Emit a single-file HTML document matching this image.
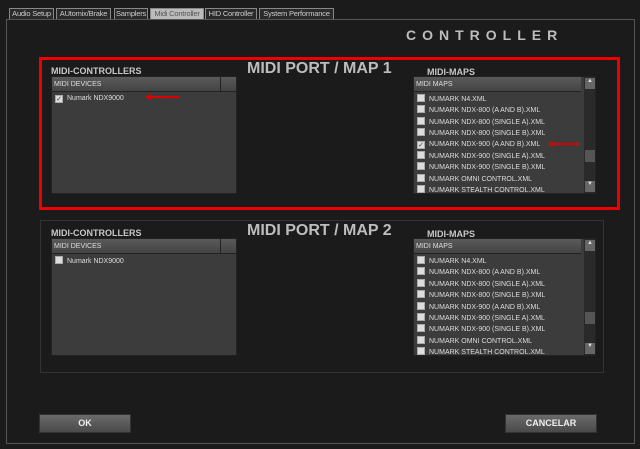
<!DOCTYPE html>
<html><head><style>
*{margin:0;padding:0;box-sizing:border-box}
body{width:640px;height:449px;background:#1b1b1b;position:relative;overflow:hidden;font-family:"Liberation Sans",sans-serif}
.a{position:absolute}
.tab{position:absolute;top:8px;height:12px;background:#2a2a2a;border:1px solid #888;color:#ccc;font-size:7.5px;letter-spacing:-0.2px;line-height:10px;padding:0 1px;white-space:nowrap;overflow:hidden;text-align:center}
.h{font-weight:bold;color:#c8c8c8;font-size:9px}
.big{font-weight:bold;color:#bdbdbd;font-size:16px}
.list{position:absolute;background:#3c3c3c;border:1px solid #222}
.hd{position:absolute;left:0;top:0;height:15px;background:linear-gradient(#5a5a5a,#444);border-bottom:1px solid #222;color:#ddd;font-size:7px;line-height:15px;padding-left:2px}
.it{position:absolute;left:3px;font-size:7px;color:#ddd;line-height:10px;white-space:nowrap}
.cb{display:inline-block;width:8px;height:8px;background:#ddd;border:1px solid #aaa;vertical-align:-1px;margin-right:4px;font-size:7px;color:#335;line-height:7px;text-align:center}
.sb{position:absolute;background:#2a2a2a}
.btn{position:absolute;height:19px;width:92px;background:linear-gradient(#6a6a6a,#4a4a4a);border:1px solid #333;color:#eee;font-weight:bold;font-size:9px;text-align:center;line-height:17px}
</style></head><body>
<div class="tab" style="left:9px;width:45px">Audio Setup</div>
<div class="tab" style="left:56px;width:55px">AUtomix/Brake</div>
<div class="tab" style="left:114px;width:34px">Samplers</div>
<div class="tab" style="left:150px;width:54px;background:#bbb;color:#555">Midi Controller</div>
<div class="tab" style="left:205px;width:52px">HID Controller</div>
<div class="tab" style="left:259px;width:75px">System Performance</div>
<div class="a" style="left:6px;top:19px;width:629px;height:425px;border:1px solid #555"></div>
<div class="a big" style="left:406px;top:27px;letter-spacing:6px;font-size:14px">CONTROLLER</div>

<div class="a" style="left:39px;top:57px;width:581px;height:153px;border:3px solid #e00"></div>
<div class="a" style="left:40px;top:220px;width:564px;height:153px;border:1px solid #333"></div>

<div id="s1"></div>
<script>
function sec(y,chk1){
 let h='';
 h+=`<div class="a h" style="left:51px;top:${y}px">MIDI-CONTROLLERS</div>`;
 h+=`<div class="a big" style="left:247px;top:${y-6}px">MIDI PORT / MAP ${chk1?1:2}</div>`;
 h+=`<div class="a h" style="left:427px;top:${y+1}px">MIDI-MAPS</div>`;
 let ly=y+10;
 h+=`<div class="list" style="left:51px;top:${ly}px;width:186px;height:118px"><div class="hd" style="width:168px">MIDI DEVICES</div><div class="hd" style="left:168px;width:16px;border-left:1px solid #222"></div><div class="it" style="top:17px"><span class="cb">${chk1?'✓':''}</span>Numark NDX9000</div></div>`;
 const items=['NUMARK N4.XML','NUMARK NDX-800 (A AND B).XML','NUMARK NDX-800 (SINGLE A).XML','NUMARK NDX-800 (SINGLE B).XML','NUMARK NDX-900 (A AND B).XML','NUMARK NDX-900 (SINGLE A).XML','NUMARK NDX-900 (SINGLE B).XML','NUMARK OMNI CONTROL.XML','NUMARK STEALTH CONTROL.XML'];
 let l=`<div class="list" style="left:413px;top:${ly}px;width:183px;height:118px;overflow:hidden"><div class="hd" style="width:167px">MIDI MAPS</div>`;
 items.forEach((t,i)=>{l+=`<div class="it" style="top:${17+i*11.4}px"><span class="cb">${(chk1&&i==4)?'✓':''}</span>${t}</div>`});
 l+=`<div class="sb" style="left:170px;top:0;width:12px;height:117px"></div><div class="a" style="left:171px;top:1px;width:10px;height:11px;background:#666;color:#ddd;font-size:6px;text-align:center">▲</div><div class="a" style="left:171px;top:73px;width:10px;height:12px;background:#555"></div><div class="a" style="left:171px;top:104px;width:10px;height:11px;background:#666;color:#ddd;font-size:6px;text-align:center">▼</div></div>`;
 h+=l;
 if(chk1){h+=`<div class="a" style="left:146px;top:${ly+20}px;width:34px;height:2px;background:#d00"></div><div class="a" style="left:142px;top:${ly+18}px;border:3px solid transparent;border-right:6px solid #d00"></div>`;
 h+=`<div class="a" style="left:550px;top:${ly+67}px;width:30px;height:2px;background:#d00"></div><div class="a" style="left:545px;top:${ly+65}px;border:3px solid transparent;border-right:6px solid #d00"></div>`}
 return h;
}
document.getElementById('s1').innerHTML=sec(66,true)+sec(228,false);
</script>
<div class="btn" style="left:39px;top:414px">OK</div>
<div class="btn" style="left:505px;top:414px">CANCELAR</div>
</body></html>
